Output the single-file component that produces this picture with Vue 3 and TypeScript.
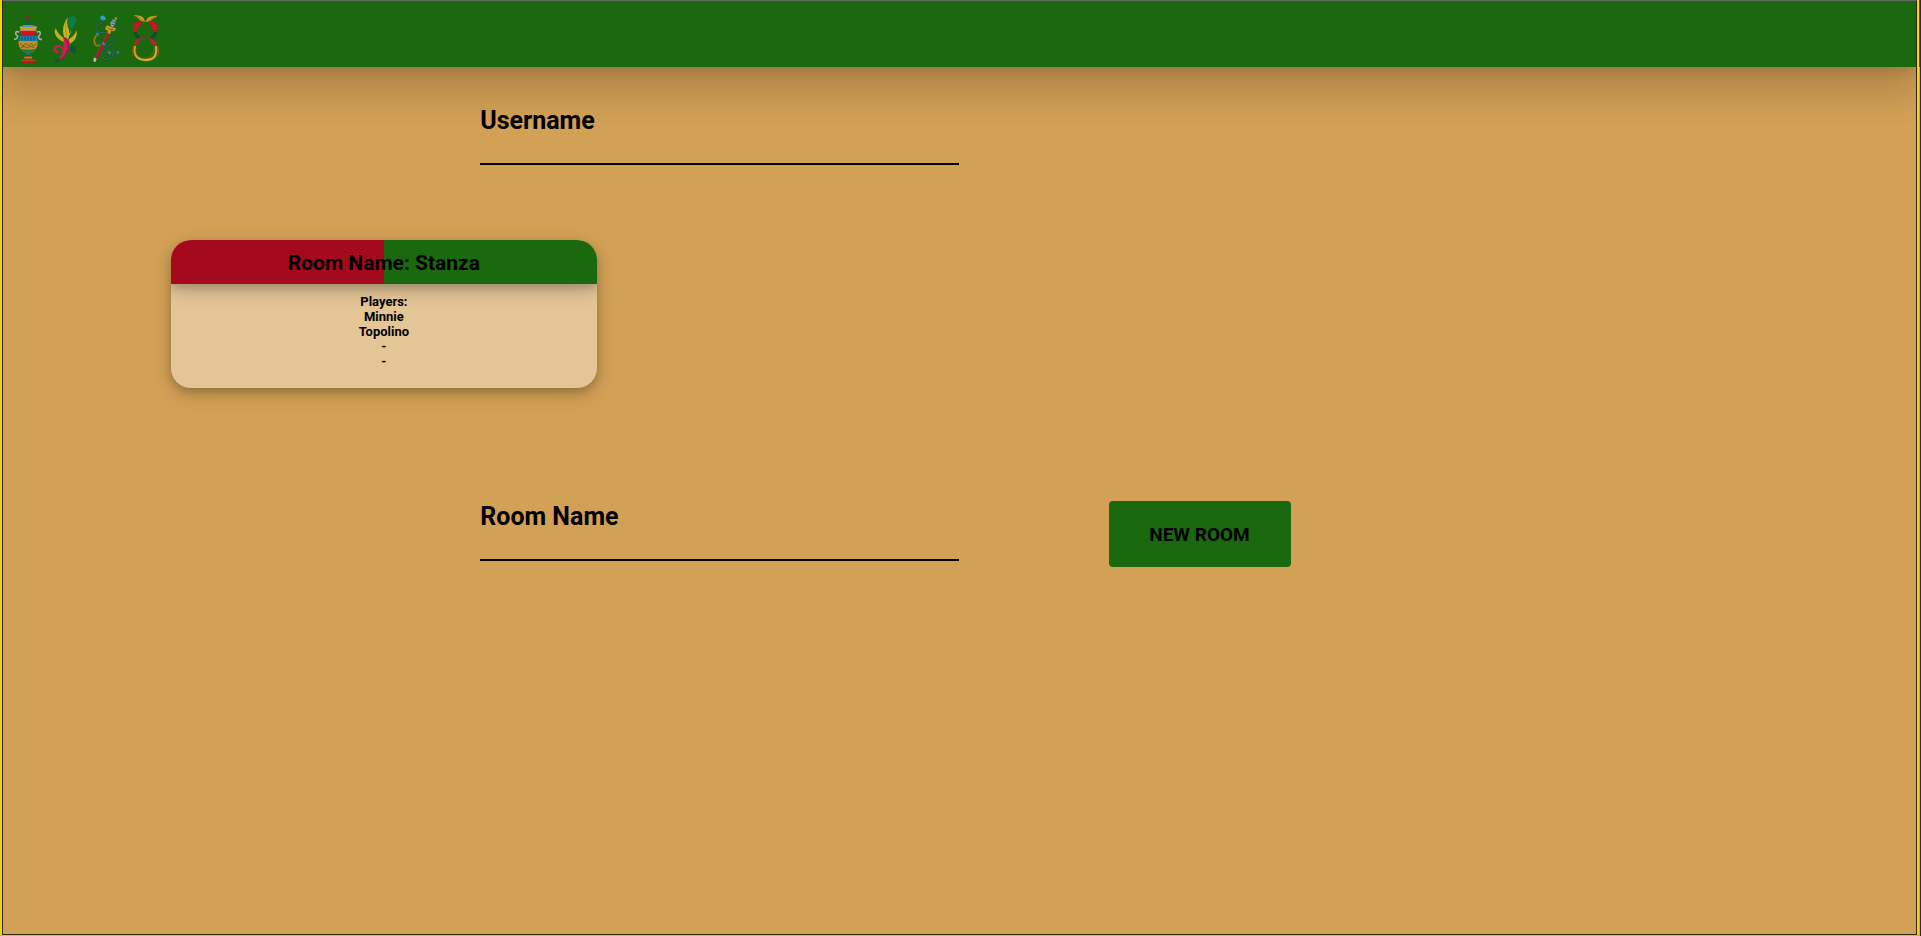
<script setup lang="ts">
import { ref } from 'vue'

interface Room {
  name: string
  players: string[]
}

const username = ref('')
const roomName = ref('')
const rooms = ref<Room[]>([{ name: 'Stanza', players: ['Minnie', 'Topolino', '-', '-'] }])

function createRoom() {
  if (!roomName.value) return
  rooms.value.push({ name: roomName.value, players: [username.value || '-', '-', '-', '-'] })
  roomName.value = ''
}
</script>

<template>
  <div class="outer">
    <div class="frame">
      <header class="bar">
        <!-- cup -->
        <svg class="suit" viewBox="36 27 96 168" aria-hidden="true">
          <path d="M80 56q-1-10 4-11q6 1 5 10l-2 8h-5z" fill="#3d4a2b" />
          <circle cx="84" cy="50" r="5" fill="#a3202c" />
          <path d="M76 74q0-10 8-12q8 3 8 12z" fill="#12603f" />
          <path d="M58 83q4-7 26-8q24 1 28 8q-4 6-27 6t-27-6z" fill="#d09c28" />
          <path d="M66 78q18-5 38 0v3H66z" fill="#4f95b4" />
          <path d="M60 89h48l-4 21H64z" fill="#cf1620" />
          <path d="M60 88h49v4H60z" fill="#c9b97c" />
          <path d="M58 97q-10-6-11 3q0 6 6 9q-2 10-11 8M110 97q10-6 11 2q0 6-6 11q3 10 11 8" fill="none" stroke="#a3ada0" stroke-width="5" />
          <path d="M60 108h50l3 16H57z" fill="#1b80ad" />
          <path d="M66 110v12m9-12v12m9-12v12m9-12v12m9-12v12" stroke="#0c4a68" stroke-width="3" />
          <path d="M56 123h57q1 18-8 26H64q-10-10-8-26z" fill="#c08e27" />
          <path d="M60 130l9 8 8-8 8 8 8-8 8 8 8-7M63 143l9-4 9 5 9-5 13 4" fill="none" stroke="#775b1d" stroke-width="3" />
          <path d="M60 147q24 6 49 0q-3 9-14 11l-4 8H78l-4-8q-11-2-14-11z" fill="#177443" />
          <path d="M69 151l7 7m5-6l3 9m9-9l-5 9m14-9l-6 5" stroke="#5f8f3f" stroke-width="2" />
          <path d="M78 165h13v6H78z" fill="#a01c22" />
          <path d="M73 170h23v6H73z" fill="#b88427" />
          <path d="M72 176h25l9 5v8H63v-8z" fill="#a82118" />
          <path d="M63 181h43" stroke="#c0701f" stroke-width="2" />
        </svg>
        <!-- club -->
        <svg class="suit" viewBox="153 27 96 168" aria-hidden="true">
          <path d="M205 56q5-8 14-8q11 3 10 15q-2 10-10 18q-7 9-11 18q-5-10-6-22z" fill="#068048" />
          <path d="M206 51q-12 10-16 30q-3 16 2 29l12 10q2-13 9-24q-8-9-8-22q-2-12 1-23z" fill="#cbb61f" />
          <path d="M205 52q-4 14 0 28q5 9 4 19" fill="none" stroke="#23471c" stroke-width="3" />
          <path d="M198 66q-3 22 2 44" fill="none" stroke="#8d8419" stroke-width="2" />
          <path d="M167 85q-5 8-2 16q3 10 14 18l12 8 5-9-12-9q-11-9-17-24zM230 91q-6 15-14 20l-9 7-2 16q16-7 22-20q5-10 3-23z" fill="#c8ae1e" />
          <path d="M190 110q14 2 19 16q3 18-7 33q-11 16-29 27q13-19 17-38q2-16 0-38z" fill="#c91f55" />
          <path d="M195 114q13 14 10 31q-5 20-22 36" fill="none" stroke="#7b183e" stroke-width="3" />
          <path d="M189 151q-3-13-16-13q-12 2-11 13q5 9 14 4M164 143q-2 7 7 10" fill="none" stroke="#c41f55" stroke-width="6" />
          <path d="M210 140l17-3v22q-12 1-18-8zM163 184q6-8 19-6l-8 8q-5 3-11-2z" fill="#0d5438" />
        </svg>
        <!-- sword -->
        <svg class="suit" viewBox="15 27 96 168" aria-hidden="true">
          <path d="M58 59q-4 10-17 14q-13 7-7 18q8 9 25 7q23 0 31 10q5 12-7 21q-19 9-29 23q-6 18 5 26q13 5 23-9q9-14 2-27" fill="none" stroke="#164c3e" stroke-width="6" />
          <path d="M58 59q-4 10-17 14q-13 7-7 18q8 9 25 7q23 0 31 10q5 12-7 21q-19 9-29 23q-6 18 5 26q13 5 23-9q9-14 2-27" fill="none" stroke="#43865a" stroke-width="2" />
          <path d="M38 103q-15 11-8 30q6 8 15 1" fill="none" stroke="#a4791a" stroke-width="5" />
          <path d="M67 97l8 5-40 79-8-4z" fill="#a71c2a" />
          <path d="M65 104l-34 68" stroke="#c33c36" stroke-width="2" stroke-dasharray="7 3" />
          <path d="M27 172l8 5-4 9-6-2z" fill="#bec5ca" />
          <path d="M78 79l-2-10 8-11 8 4-3 12-6 8z" fill="#7da9b5" />
          <path d="M80 72l9 3m-7-11l8 4" stroke="#435774" stroke-width="3" />
          <path d="M88 55l5-5 4 5-5 8z" fill="#bd8b22" />
          <path d="M62 80q6-6 12-1l8 4q9-2 11 4l-7 7-8-2-3 10-7-2v-9l-7-3z" fill="#d49921" />
          <path d="M68 82l8 7 9-1" fill="none" stroke="#795414" stroke-width="3" />
          <path d="M46 50l7-4 8 6 1 8-12 1-4-6z" fill="#26a6c6" />
          <path d="M34 101l8 2m10 24l8 8m9 19l8 7m18-6l7 4" stroke="#2477a0" stroke-width="8" />
          <path d="M35 101l6 2m13 26l4 4m13 23l5 4" stroke="#66b2be" stroke-width="2" />
        </svg>
        <!-- coin ribbon -->
        <svg class="suit" viewBox="132 27 96 168" aria-hidden="true">
          <path d="M165 67q13-6 31 0M151 88q-5 22 11 28q20 4 38 0q18-7 11-27" fill="none" stroke="#842a20" stroke-width="2" />
          <path d="M146 46q18-2 28 6l7 13-13-2q-12-12-22-17zM215 47q-17-1-27 7l-7 12 13-2q9-9 21-14z" fill="#d79a20" />
          <path d="M150 48q14 2 24 15m36-14l-22 15" fill="none" stroke="#8b6515" stroke-width="2" />
          <path d="M166 63q-18 0-22 13l2 20 12 1q-2-15 12-26zM196 63q16 0 21 13l-2 22-11 1q1-17-12-28z" fill="#bd1726" />
          <path d="M149 75l14 2m-15 9l11 2m41-9l13-3m-10 11l12-1" stroke="#d22c30" stroke-width="2" />
          <path d="M150 96q2 12 15 18M213 96q-3 12-15 18" fill="none" stroke="#154c29" stroke-width="10" />
          <path d="M163 115q19 6 36 0" fill="none" stroke="#8a3520" stroke-width="3" />
          <path d="M164 115q-10 3-16 13l2 9q11-4 17-21zM197 116q13 3 18 14l-2 10q-14-5-19-23z" fill="#c11d32" />
          <path d="M150 138q-4 25 7 34q12 9 27 8q20-1 27-14q5-12 2-28" fill="none" stroke="#d5a51d" stroke-width="7" />
          <path d="M145 140q-5 15-1 28M219 138q4 15 0 30" fill="none" stroke="#7c561a" stroke-width="3" />
          <path d="M153 142q-5 20 9 29q16 10 32 0q16-9 13-29" fill="none" stroke="#906819" stroke-width="2" />
          <path d="M160 177q22 9 40 0" fill="none" stroke="#dcb638" stroke-width="3" />
        </svg>
      </header>

      <main class="lobby">
        <div class="field">
          <label for="username">Username</label>
          <input id="username" v-model="username" type="text" autocomplete="off" />
        </div>

        <section class="rooms">
          <article v-for="room in rooms" :key="room.name" class="card">
            <h2>Room Name: {{ room.name }}</h2>
            <div class="players">
              <p>Players:</p>
              <p v-for="(player, i) in room.players" :key="i">{{ player }}</p>
            </div>
          </article>
        </section>

        <form class="create" @submit.prevent="createRoom">
          <div class="field">
            <label for="room-name">Room Name</label>
            <input id="room-name" v-model="roomName" type="text" autocomplete="off" />
          </div>
          <button type="submit">NEW ROOM</button>
        </form>
      </main>
    </div>
  </div>
</template>

<style>
body {
  margin: 0;
}
</style>

<style scoped>
.outer {
  box-sizing: border-box;
  min-height: 100vh;
  display: flex;
  background: linear-gradient(#1a690f 67px, #d3a156 67px);
  border-right: 1px solid #2c2622;
  padding-right: 1px;
  font-family: Roboto, "Liberation Sans", sans-serif;
  font-weight: 700;
  color: #000;
}

.frame {
  flex: 1;
  border: solid #2c2622;
  border-width: 1px;
  border-top-color: #666;
  box-shadow: -2px 0 #f2d30c, 2px 0 #ffd400, 0 1px #e5c01c;
  margin: 0 2px 1px;
  overflow: hidden;
  background: #d3a156;
}

.bar {
  box-sizing: border-box;
  height: 66px;
  display: flex;
  gap: 7px;
  padding: 8px 9px 0;
  background: #1a690f;
  box-shadow:
    0 24px 38px 3px rgba(0, 0, 0, 0.1),
    0 9px 46px 8px rgba(0, 0, 0, 0.1),
    0 4px 12px rgba(0, 0, 0, 0.1);
}

.suit {
  width: 32px;
  height: 56px;
}

.lobby {
  padding-top: 38px;
}

.field {
  width: 25%;
  margin-left: 477px;
  margin-left: calc(25vw - 3px);
  display: flex;
  flex-direction: column;
}

.field label {
  font-size: 25px;
  line-height: 32px;
}

.field input {
  box-sizing: border-box;
  width: 100%;
  height: 28px;
  padding: 0;
  border: 0;
  border-bottom: 2px solid #000;
  border-radius: 0;
  outline: 0;
  background: transparent;
  font: inherit;
  font-size: 20px;
}

.rooms {
  display: flex;
  flex-wrap: wrap;
  gap: 32px;
  padding: 75px 168px 0;
}

.card {
  width: 27%;
  border-radius: 20px;
  overflow: hidden;
  text-align: center;
  background: #e3c596;
  box-shadow:
    0 4px 8px rgba(0, 0, 0, 0.16),
    0 6px 20px rgba(0, 0, 0, 0.19);
}

.card h2 {
  margin: 0;
  padding-top: 2px;
  font-size: 21px;
  line-height: 42px;
  background: linear-gradient(90deg, #a5091c 50%, #1a690f 50%);
  box-shadow:
    0 4px 8px rgba(0, 0, 0, 0.16),
    0 6px 20px rgba(0, 0, 0, 0.19);
}

.players {
  padding: 10px 0 19px;
}

.players p {
  margin: 0;
  font-size: 13px;
  line-height: 15px;
}

.create {
  display: flex;
  align-items: flex-end;
  margin-top: 113px;
}

.create .field {
  margin-bottom: 6px;
}

button {
  width: 182px;
  height: 66px;
  margin: 0 0 0 150px;
  padding: 0;
  border: 0;
  border-radius: 4px;
  background: #1a690f;
  color: #000;
  font: inherit;
  font-size: 19px;
  cursor: pointer;
}
</style>
